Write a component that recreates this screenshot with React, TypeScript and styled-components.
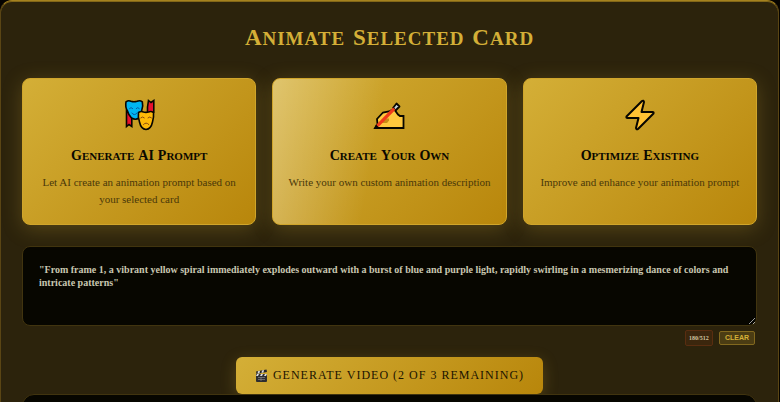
import React, { useState } from "react";
import styled, { createGlobalStyle, css } from "styled-components";

const GlobalStyle = createGlobalStyle`
  * { box-sizing: border-box; }
  body {
    margin: 0;
    background: #050300;
    font-family: "Liberation Serif", serif;
  }
`;

const gold = "linear-gradient(135deg, #d4af37 0%, #b8860b 100%)";

const Page = styled.div`
  height: 100vh;
  overflow: hidden;
  padding-right: 1px;
`;

const Panel = styled.main`
  min-height: 110vh;
  padding: 19px 21px;
  border: 1px solid #5a4514;
  border-top-color: #a5821f;
  border-radius: 12px;
  background: #2c230c;
  box-shadow: inset 0 1px 0 #836718;
`;

const Word = styled.span<{ $capital: number; $acronym: boolean }>`
  display: inline-block;
  font-variant: small-caps;

  &::first-letter {
    font-variant: normal;
    font-size: ${({ $capital }) => $capital}px;
  }

  ${({ $acronym, $capital }) =>
    $acronym &&
    css`
      font-variant: normal;
      font-size: ${$capital}px;
    `}
`;

const Title = styled.h1`
  margin: 0 0 24px;
  color: #d4af37;
  font-size: 27px;
  font-weight: 700;
  line-height: 32px;
  letter-spacing: 1px;
  text-align: center;
`;

const Cards = styled.div`
  display: grid;
  grid-template-columns: repeat(3, 1fr);
  gap: 16px;
  margin-bottom: 21px;
`;

const Card = styled.button<{ $active?: boolean }>`
  display: flex;
  flex-direction: column;
  align-items: center;
  min-height: 147px;
  padding: 20px 12px 16px;
  border: 1px solid #d0a52b;
  border-radius: 8px;
  background: ${gold} border-box;
  box-shadow: 0 4px 20px rgba(212, 175, 55, 0.25);
  color: #0a0800;
  font-family: inherit;
  cursor: pointer;

  ${({ $active }) =>
    $active &&
    css`
      background:
        linear-gradient(100deg, rgba(255, 255, 255, 0.28), rgba(255, 255, 255, 0) 44%) border-box,
        ${gold} border-box;
    `}
`;

const CardIcon = styled.svg`
  width: 32px;
  height: 32px;
  margin-bottom: 14px;
`;

const CardTitle = styled.span`
  margin-bottom: 8px;
  font-size: 16px;
  font-weight: 700;
  line-height: 20px;
`;

const CardText = styled.span`
  color: #4a3809;
  font-size: 11px;
  line-height: 17px;
  text-align: center;
`;

const Prompt = styled.textarea`
  display: block;
  width: 100%;
  height: 80px;
  padding: 16px;
  border: 1px solid #41340f;
  border-radius: 8px;
  outline: none;
  background: #070600;
  color: #c9c6b0;
  font-family: inherit;
  font-size: 10px;
  font-weight: 700;
  line-height: 13px;
  resize: vertical;
`;

const Tools = styled.div`
  display: flex;
  justify-content: flex-end;
  align-items: center;
  gap: 6px;
  height: 16px;
  margin: 4px 2px 11px;
`;

const Counter = styled.output`
  width: 28px;
  border: 1px solid #592d10;
  border-radius: 2px;
  background: #3b260d;
  color: #d0c4a0;
  font-size: 6px;
  font-weight: 700;
  line-height: 14px;
  text-align: center;
`;

const Clear = styled.button`
  height: 14px;
  padding: 0 5px;
  border: 1px solid #82681e;
  border-radius: 2px;
  background: #4b3c13;
  color: #d4af37;
  font-family: "Liberation Sans", sans-serif;
  font-size: 7px;
  font-weight: 700;
  line-height: 12px;
  cursor: pointer;
`;

const Generate = styled.button`
  display: flex;
  align-items: center;
  gap: 5px;
  height: 37px;
  margin: 0 auto;
  padding: 0 19px;
  border: 0;
  border-radius: 6px;
  background: ${gold};
  box-shadow: 0 4px 15px rgba(212, 175, 55, 0.25);
  color: #1b1400;
  font-family: inherit;
  font-size: 12px;
  font-weight: 400;
  letter-spacing: 1px;
  white-space: nowrap;
  cursor: pointer;
`;

const Clapper = styled.svg`
  width: 13px;
  height: 13px;
`;

const Result = styled.section`
  min-height: 80px;
  border: 1px solid #41340f;
  border-radius: 12px;
  background: #070600;
`;

function Words({ text, capital }: { text: string; capital: number }) {
  return (
    <>
      {text.split(" ").map((word, i) => (
        <React.Fragment key={word}>
          {i > 0 && " "}
          <Word $capital={capital} $acronym={word === word.toUpperCase()}>
            {word}
          </Word>
        </React.Fragment>
      ))}
    </>
  );
}

function MasksIcon() {
  return (
    <CardIcon viewBox="0 0 32 32" aria-hidden="true">
      <g stroke="#080600" strokeWidth="1.6" strokeLinejoin="miter" strokeLinecap="round">
        <path d="M3.500 12 V27.500 L6 25.500 L8.800 27.500 V17 Z" fill="#e8112d" />
        <path d="M25.500 1.500 L28 3.500 L30.800 1.500 V13 L29 17 H24.500 V8 Z" fill="#e8112d" />
        <path d="M3 2.800 Q5.500 1 8 2.300 Q11 3.300 14 2.300 Q17 1 19.300 2.800 Q20.300 7 18.800 11 Q18.500 16 16 19 Q12.500 21.500 8.500 19 Q5.500 16 4.500 12 Q2 8 3 2.800 Z" fill="#00b5f1" />
        <path d="M15.500 13.500 Q18 11.800 20.500 13 Q23 13.700 25.500 13 Q28 11.800 30.500 13.500 Q31 18 29.500 23 Q28 30 23 30.500 Q18 30 16.500 23 Q14.800 18 15.500 13.500 Z" fill="#ffba08" />
      </g>
      <g fill="none" stroke="#0a5aa0" strokeWidth="1" strokeLinecap="round">
        <path d="M6.500 9.500 Q8 7.500 9.700 9.500 M13.200 9.500 Q14.700 7.500 16.300 9.500 M8.800 14 Q11.300 17.500 14 14" />
      </g>
      <g fill="none" stroke="#8b4a12" strokeWidth="1" strokeLinecap="round">
        <path d="M17.800 18.800 Q19.500 17 21.300 18.800 M25 18.800 Q26.800 17 28.500 18.800 M20.500 25.500 Q23 22.500 25.800 25.500" />
      </g>
    </CardIcon>
  );
}

function WritingIcon() {
  return (
    <CardIcon viewBox="0 0 32 32" aria-hidden="true">
      <path
        d="M2 29 L4.500 25 L4 20 L10 13.500 L16 12.500 L21 10 L25 15.500 L27 17 H30.500 V29 Z"
        fill="#ffc83d"
        stroke="#080600"
        strokeWidth="1.800"
      />
      <path d="M8 24 L12 19.500 H16 V21.500 L14 24 Z" fill="#c98d16" />
      <path d="M20 9 L23.500 4.500 L26.500 7.500 L22.500 11.500 Z" fill="#c5d0d8" stroke="#080600" strokeWidth="1.800" strokeLinejoin="round" />
      <path d="M3 28.500 L3.500 25.500 L20 8.500 L22.500 10.800 L6 27.500 Z" fill="#ef3b1a" />
      <path d="M1.500 29.500 L3 25.500 L6.500 29 Z" fill="#080600" />
    </CardIcon>
  );
}

function BoltIcon() {
  return (
    <CardIcon viewBox="0 0 32 32" aria-hidden="true">
      <path
        d="M18 2 L2.500 17.500 Q2 19 3.500 19 H14.500 L12 29 Q12.500 31 14 30 L29.500 14.500 Q30 13 28.500 13 H17.500 L20 3 Q19.500 1 18 2 Z"
        fill="#ffc233"
        stroke="#080600"
        strokeWidth="2"
        strokeLinejoin="round"
      />
    </CardIcon>
  );
}

function ClapperIcon() {
  return (
    <Clapper viewBox="0 0 13 13" aria-hidden="true">
      <path d="M1 5 H12 V12 Q12 13 11 13 H2 Q1 13 1 12 Z" fill="#2d2d30" />
      <path d="M1 2.500 L11.500 0.500 L12 3 L1.500 5 Z" fill="#25252a" />
      <path d="M3 2.200 L5 1.800 L4.500 4.300 L2.500 4.700 Z M7 1.400 L9 1 L8.500 3.600 L6.500 4 Z M2 5 H4 L3 7 H1 Z M6 5 H8 L7 7 H5 Z M10 5 H12 L11 7 H9 Z" fill="#ddd" />
      <path d="M3 8.500 H10 M3 10.500 H10 M6 8.500 V12" stroke="#85858a" strokeWidth="0.700" />
    </Clapper>
  );
}

const options = [
  {
    icon: <MasksIcon />,
    title: "Generate AI Prompt",
    text: "Let AI create an animation prompt based on your selected card",
  },
  {
    icon: <WritingIcon />,
    title: "Create Your Own",
    text: "Write your own custom animation description",
  },
  {
    icon: <BoltIcon />,
    title: "Optimize Existing",
    text: "Improve and enhance your animation prompt",
  },
];

export default function App() {
  const [active, setActive] = useState(1);
  const [prompt, setPrompt] = useState(
    '"From frame 1, a vibrant yellow spiral immediately explodes outward with a burst of blue and purple light, rapidly swirling in a mesmerizing dance of colors and intricate patterns"'
  );

  return (
    <Page>
      <GlobalStyle />
      <Panel>
        <Title>
          <Words text="Animate Selected Card" capital={23} />
        </Title>
        <Cards>
          {options.map((option, i) => (
            <Card key={option.title} type="button" $active={i === active} onClick={() => setActive(i)}>
              {option.icon}
              <CardTitle>
                <Words text={option.title} capital={14} />
              </CardTitle>
              <CardText>{option.text}</CardText>
            </Card>
          ))}
        </Cards>
        <Prompt
          aria-label="Animation prompt"
          spellCheck={false}
          maxLength={512}
          value={prompt}
          onChange={(e) => setPrompt(e.target.value)}
        />
        <Tools>
          <Counter>{prompt.length}/512</Counter>
          <Clear type="button" onClick={() => setPrompt("")}>
            CLEAR
          </Clear>
        </Tools>
        <Generate type="button">
          <ClapperIcon />
          GENERATE VIDEO (2 OF 3 REMAINING)
        </Generate>
        <Result aria-label="Generated video" />
      </Panel>
    </Page>
  );
}
